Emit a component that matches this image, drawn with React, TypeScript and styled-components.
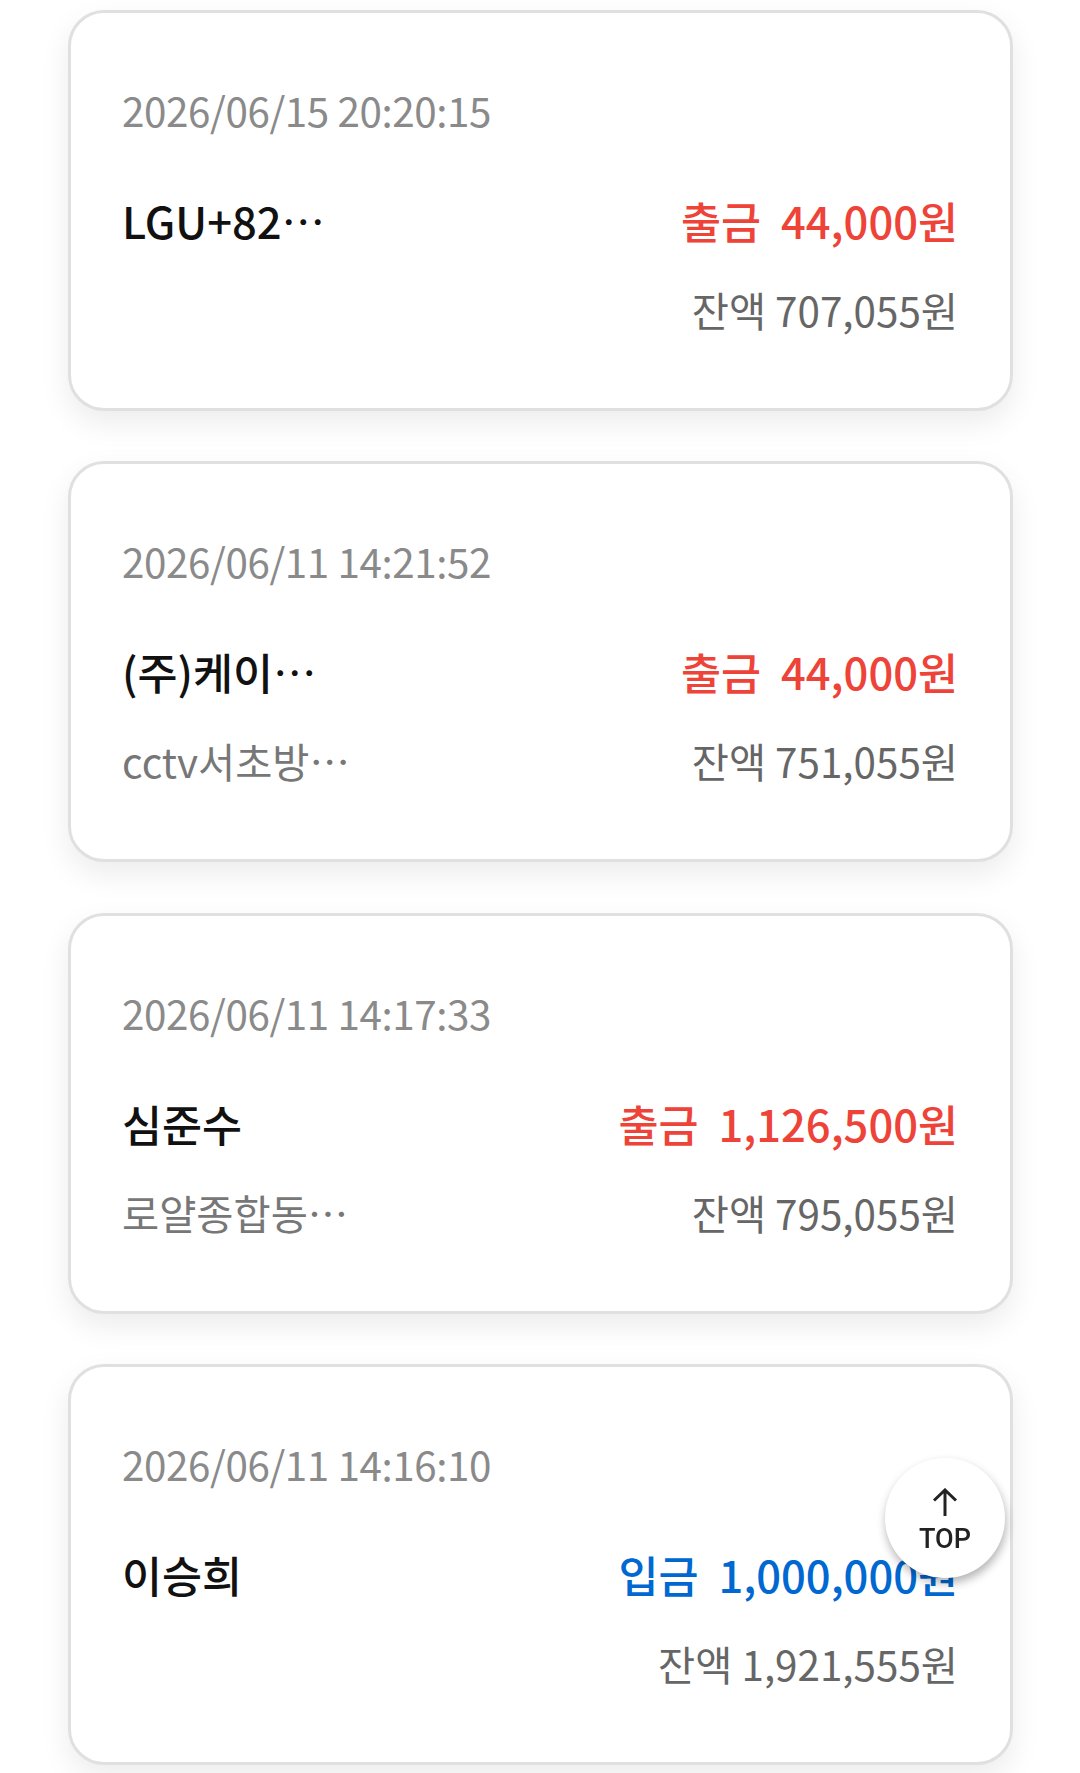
import styled, { createGlobalStyle } from "styled-components";

const GlobalStyle = createGlobalStyle`
  html, body {
    margin: 0;
    padding: 0;
    height: 1773px;
    overflow: hidden;
    background: #fff;
    font-family: "Noto Sans CJK KR", "Noto Sans", sans-serif;
  }
`;

const List = styled.div`
  display: flex;
  flex-direction: column;
  gap: 50.5px;
  padding: 9.75px 67px 0 68px;
`;

const Card = styled.div`
  box-sizing: border-box;
  height: 401px;
  padding: 68px 52px 0 51px;
  background: #fff;
  border: 3px solid #e0e0e0;
  border-radius: 36px;
  box-shadow: 0 12px 30px rgba(0, 0, 0, 0.08);
`;

const DateText = styled.div`
  font-size: 40.4px;
  line-height: 58px;
  letter-spacing: -0.42px;
  color: #8a8a8a;
`;

const Row = styled.div`
  display: flex;
  justify-content: space-between;
  align-items: center;
  height: 58px;
`;

const MainRow = styled(Row)`
  margin-top: 53px;
`;

const SubRow = styled(Row)`
  margin-top: 31px;
`;

const Name = styled.div`
  font-size: 43.5px;
  line-height: 58px;
  font-weight: 500;
  color: #111;
`;

const Memo = styled.div`
  font-size: 40.4px;
  line-height: 58px;
  color: #777;
`;

const Dots = styled.span`
  display: inline-block;
  font-weight: 400;
`;

const Amount = styled.div<{ $kind: "in" | "out" }>`
  display: flex;
  gap: 20px;
  font-size: 43.5px;
  line-height: 58px;
  font-weight: 500;
  color: ${({ $kind }) => ($kind === "in" ? "#0068d0" : "#ee4338")};
`;

const Balance = styled.div`
  font-size: 40.4px;
  line-height: 58px;
  color: #666;
`;

const TopButton = styled.button`
  position: fixed;
  left: 885px;
  top: 1458px;
  width: 120px;
  height: 120px;
  padding: 5px 0 0;
  border: 0;
  border-radius: 50%;
  background: #fff;
  box-shadow: 1px 5px 10px rgba(0, 0, 0, 0.3);
  color: #222;
  display: flex;
  flex-direction: column;
  align-items: center;
  justify-content: center;
  font-family: Roboto, sans-serif;
  font-size: 27px;
  font-weight: 500;
  line-height: 30px;
`;

const TopIcon = styled.svg`
  width: 26px;
  height: 28px;
  margin-bottom: 8px;
`;

const items = [
  { date: "2026/06/15 20:20:15", name: "LGU+82", cut: true, memo: "", memoCut: false, kind: "out", label: "출금", amount: "44,000원", balance: "잔액 707,055원" },
  { date: "2026/06/11 14:21:52", name: "(주)케이", cut: true, memo: "cctv서초방", memoCut: true, kind: "out", label: "출금", amount: "44,000원", balance: "잔액 751,055원" },
  { date: "2026/06/11 14:17:33", name: "심준수", cut: false, memo: "로얄종합동", memoCut: true, kind: "out", label: "출금", amount: "1,126,500원", balance: "잔액 795,055원" },
  { date: "2026/06/11 14:16:10", name: "이승희", cut: false, memo: "", memoCut: false, kind: "in", label: "입금", amount: "1,000,000원", balance: "잔액 1,921,555원" },
] as const;

export default function App() {
  return (
    <>
      <GlobalStyle />
      <List>
        {items.map((item) => (
          <Card key={item.date}>
            <DateText>{item.date}</DateText>
            <MainRow>
              <Name>
                {item.name}
                {item.cut && <Dots lang="ko">…</Dots>}
              </Name>
              <Amount $kind={item.kind}>
                <span>{item.label}</span>
                <span>{item.amount}</span>
              </Amount>
            </MainRow>
            <SubRow>
              <Memo>
                {item.memo}
                {item.memoCut && <Dots lang="ko">…</Dots>}
              </Memo>
              <Balance>{item.balance}</Balance>
            </SubRow>
          </Card>
        ))}
      </List>
      <TopButton>
        <TopIcon viewBox="0 0 26 28" fill="none" stroke="#222" strokeWidth="3">
          <path d="M13 28V2M2 12.5L13 2l11 10.5" />
        </TopIcon>
        TOP
      </TopButton>
    </>
  );
}
